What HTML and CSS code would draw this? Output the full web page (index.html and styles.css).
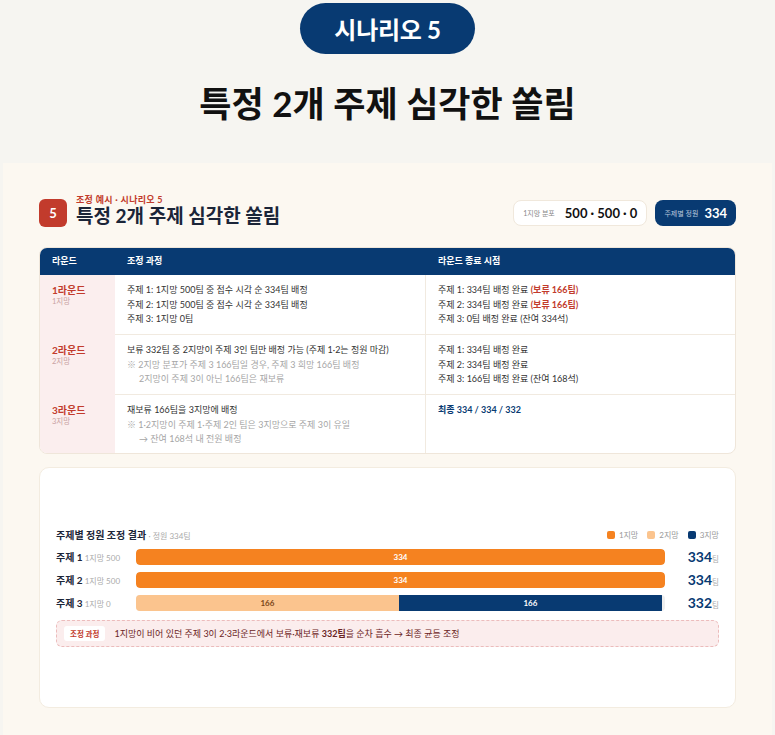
FILE: index.html
```html
<!DOCTYPE html>
<html lang="ko">
<head>
<meta charset="utf-8">
<link rel="stylesheet" href="styles.css">
</head>
<body>
<header class="top">
  <div class="pill">시나리오 5</div>
  <h1 class="big-title">특정 2개 주제 심각한 쏠림</h1>
</header>
<main class="panel">
  <div class="head">
    <div class="head-left">
      <div class="badge">5</div>
      <div class="head-text">
        <div class="kicker">조정 예시 · 시나리오 5</div>
        <h2 class="title">특정 2개 주제 심각한 쏠림</h2>
      </div>
    </div>
    <div class="chips">
      <div class="chip chip-light"><span class="chip-label">1지망 분포</span><span class="chip-num">500 · 500 · 0</span></div>
      <div class="chip chip-dark"><span class="chip-label">주제별 정원</span><span class="chip-num">334</span></div>
    </div>
  </div>

  <div class="table">
    <div class="trow thead">
      <div class="c1">라운드</div>
      <div class="c2">조정 과정</div>
      <div class="c3">라운드 종료 시점</div>
    </div>
    <div class="trow">
      <div class="c1"><div class="rname">1라운드</div><div class="rsub">1지망</div></div>
      <div class="c2">주제 1: 1지망 500팀 중 접수 시각 순 334팀 배정<br>주제 2: 1지망 500팀 중 접수 시각 순 334팀 배정<br>주제 3: 1지망 0팀</div>
      <div class="c3">주제 1: 334팀 배정 완료 <b class="red">(보류 166팀)</b><br>주제 2: 334팀 배정 완료 <b class="red">(보류 166팀)</b><br>주제 3: 0팀 배정 완료 (잔여 334석)</div>
    </div>
    <div class="trow">
      <div class="c1"><div class="rname">2라운드</div><div class="rsub">2지망</div></div>
      <div class="c2">보류 332팀 중 2지망이 주제 3인 팀만 배정 가능 (주제 1·2는 정원 마감)<br><span class="muted">※ 2지망 분포가 주제 3 166팀일 경우, 주제 3 희망 166팀 배정<br><span class="indent">2지망이 주제 3이 아닌 166팀은 재보류</span></span></div>
      <div class="c3">주제 1: 334팀 배정 완료<br>주제 2: 334팀 배정 완료<br>주제 3: 166팀 배정 완료 (잔여 168석)</div>
    </div>
    <div class="trow last">
      <div class="c1"><div class="rname">3라운드</div><div class="rsub">3지망</div></div>
      <div class="c2">재보류 166팀을 3지망에 배정<br><span class="muted">※ 1·2지망이 주제 1·주제 2인 팀은 3지망으로 주제 3이 유일<br><span class="indent">→ 잔여 168석 내 전원 배정</span></span></div>
      <div class="c3"><b class="navy">최종 334 / 334 / 332</b></div>
    </div>
  </div>

  <section class="card">
    <div class="chart-head">
      <div class="chart-title">주제별 정원 조정 결과 <span class="chart-sub">· 정원 334팀</span></div>
      <div class="legend">
        <span class="lg"><i class="sw sw1"></i>1지망</span>
        <span class="lg"><i class="sw sw2"></i>2지망</span>
        <span class="lg"><i class="sw sw3"></i>3지망</span>
      </div>
    </div>
    <div class="bars">
      <div class="brow">
        <div class="blabel"><b>주제 1</b> <span>1지망 500</span></div>
        <div class="track"><div class="seg s1" style="width:100%">334</div></div>
        <div class="bval">334<small>팀</small></div>
      </div>
      <div class="brow">
        <div class="blabel"><b>주제 2</b> <span>1지망 500</span></div>
        <div class="track"><div class="seg s1" style="width:100%">334</div></div>
        <div class="bval">334<small>팀</small></div>
      </div>
      <div class="brow">
        <div class="blabel"><b>주제 3</b> <span>1지망 0</span></div>
        <div class="track"><div class="seg s2" style="width:49.7%">166</div><div class="seg s3" style="width:49.7%">166</div></div>
        <div class="bval">332<small>팀</small></div>
      </div>
    </div>
    <div class="note"><span class="tag">조정 과정</span><span class="note-text">1지망이 비어 있던 주제 3이 2·3라운드에서 보류·재보류 <b>332팀</b>을 순차 흡수 → 최종 균등 조정</span></div>
  </section>
</main>
</body>
</html>
```

FILE: styles.css
```css
* { box-sizing: border-box; margin: 0; padding: 0; }
html, body { height: 100%; }
body {
  background: #f6f5f1;
  font-family: Lato, "Noto Sans CJK KR", sans-serif;
  color: #333;
  overflow: hidden;
}
.top {
  display: flex;
  flex-direction: column;
  align-items: center;
  padding-top: 3px;
  height: 163px;
}
.pill {
  background: #083a72;
  color: #fff;
  font-weight: 700;
  font-size: 24px;
  height: 51px;
  width: 175px;
  border-radius: 26px;
  display: flex;
  align-items: center;
  justify-content: center;
  letter-spacing: -0.3px;
}
.big-title {
  margin-top: 29px;
  font-size: 35px;
  font-weight: 700;
  color: #111;
  line-height: 40px;
}
.panel {
  margin: 0 3px;
  background: #fcf8f1;
  padding: 36px 36px 40px;
  min-height: 600px;
}
.head {
  display: flex;
  justify-content: space-between;
  align-items: center;
  height: 28px;
}
.head-left { display: flex; align-items: flex-end; gap: 9px; }
.badge {
  width: 28px; height: 28px;
  border-radius: 6px;
  background: #c23b2c;
  color: #fff;
  font-weight: 700;
  font-size: 13px;
  display: flex; align-items: center; justify-content: center;
}
.head-text { display: flex; flex-direction: column; margin-top: -6px; }
.kicker { color: #c23b2c; font-size: 9px; font-weight: 700; line-height: 11px; letter-spacing: 0.3px; }
.title { font-size: 19px; font-weight: 700; color: #1b2538; line-height: 22px; }
.chips { display: flex; gap: 8px; }
.chip {
  height: 26px;
  border-radius: 8px;
  display: flex; align-items: center; gap: 10px;
  padding: 0 9px;
  white-space: nowrap;
}
.chip-light { background: #fff; border: 1px solid #f0e8dc; }
.chip-dark { background: #083a72; gap: 6px; padding: 0 9px; }
.chip-label { font-size: 7px; color: #888; }
.chip-dark .chip-label { color: #b9c7dc; }
.chip-num { font-size: 13px; font-weight: 700; color: #111; }
.chip-dark .chip-num { color: #fff; }

.table {
  margin-top: 20px;
  border: 1px solid #efe6da;
  border-radius: 8px;
  overflow: hidden;
  background: #fff;
}
.trow {
  display: grid;
  grid-template-columns: 75px 311px 1fr;
  border-bottom: 1px solid #f1eae0;
  font-size: 9px;
  line-height: 14.5px;
}
.trow.last { border-bottom: 0; }
.trow > div { padding: 8px 11px 8px 12px; }
.trow .c2 { border-right: 1px solid #f1eae0; }
.trow .c1 { background: #fbeeee; }
.thead { background: #083a72; border-bottom: 0; height: 27px; }
.thead > div { background: transparent !important; color: #fff; font-weight: 700; font-size: 9px; display: flex; align-items: center; padding-top: 0; padding-bottom: 0; border: 0 !important; }
.trow:not(.thead) { height: 60px; }
.trow.last { height: 58px; }
.rname { color: #c23b2c; font-weight: 700; font-size: 10px; line-height: 14px; }
.rsub { color: #c9a2a2; font-size: 7.5px; line-height: 10px; }
.red { color: #c23b2c; }
.navy { color: #083a72; }
.muted { color: #a6a6a6; }
.indent { padding-left: 12px; }

.card {
  margin-top: 13px;
  height: 241px;
  background: #fff;
  border: 1px solid #f3ece0;
  border-radius: 10px;
  padding: 0 16px;
  display: flex;
  flex-direction: column;
  justify-content: center;
}
.chart-head { display: flex; justify-content: space-between; align-items: center; height: 12px; }
.chart-title { font-size: 10px; font-weight: 700; color: #1b2538; }
.chart-sub { font-size: 8px; font-weight: 400; color: #aaa; }
.legend { display: flex; gap: 9px; font-size: 8px; color: #999; }
.lg { display: flex; align-items: center; gap: 4px; }
.sw { width: 8px; height: 8px; border-radius: 2px; display: inline-block; }
.sw1 { background: #f58220; }
.sw2 { background: #fbc48e; }
.sw3 { background: #083a72; }
.bars { margin-top: 8px; display: flex; flex-direction: column; gap: 7px; }
.brow { display: flex; align-items: center; height: 16px; }
.blabel { width: 80px; font-size: 8px; color: #aaa; white-space: nowrap; }
.blabel b { font-size: 10px; color: #1b2538; }
.track { width: 529px; height: 16px; display: flex; background: #eee; border-radius: 4px; overflow: hidden; }
.seg { height: 100%; display: flex; align-items: center; justify-content: center; font-size: 8px; font-weight: 700; color: #fff; }
.s1 { background: #f58220; border-radius: 4px; }
.s2 { background: #fbc48e; color: #7a4418; }
.s3 { background: #083a72; }
.bval { flex: 1; text-align: right; font-size: 14px; font-weight: 700; color: #083a72; }
.bval small { font-size: 7.5px; font-weight: 400; color: #aaa; }
.note {
  margin-top: 9px;
  height: 27px;
  background: #fbeded;
  border: 1px dashed #ecbcbc;
  border-radius: 6px;
  display: flex; align-items: center; gap: 9px;
  padding: 0 7px;
  font-size: 9px;
  color: #6b2424;
}
.note b { font-weight: 700; }
.tag { background: #fff; color: #c23b2c; font-weight: 700; font-size: 7.5px; padding: 2px 6px; border-radius: 3px; }
```
